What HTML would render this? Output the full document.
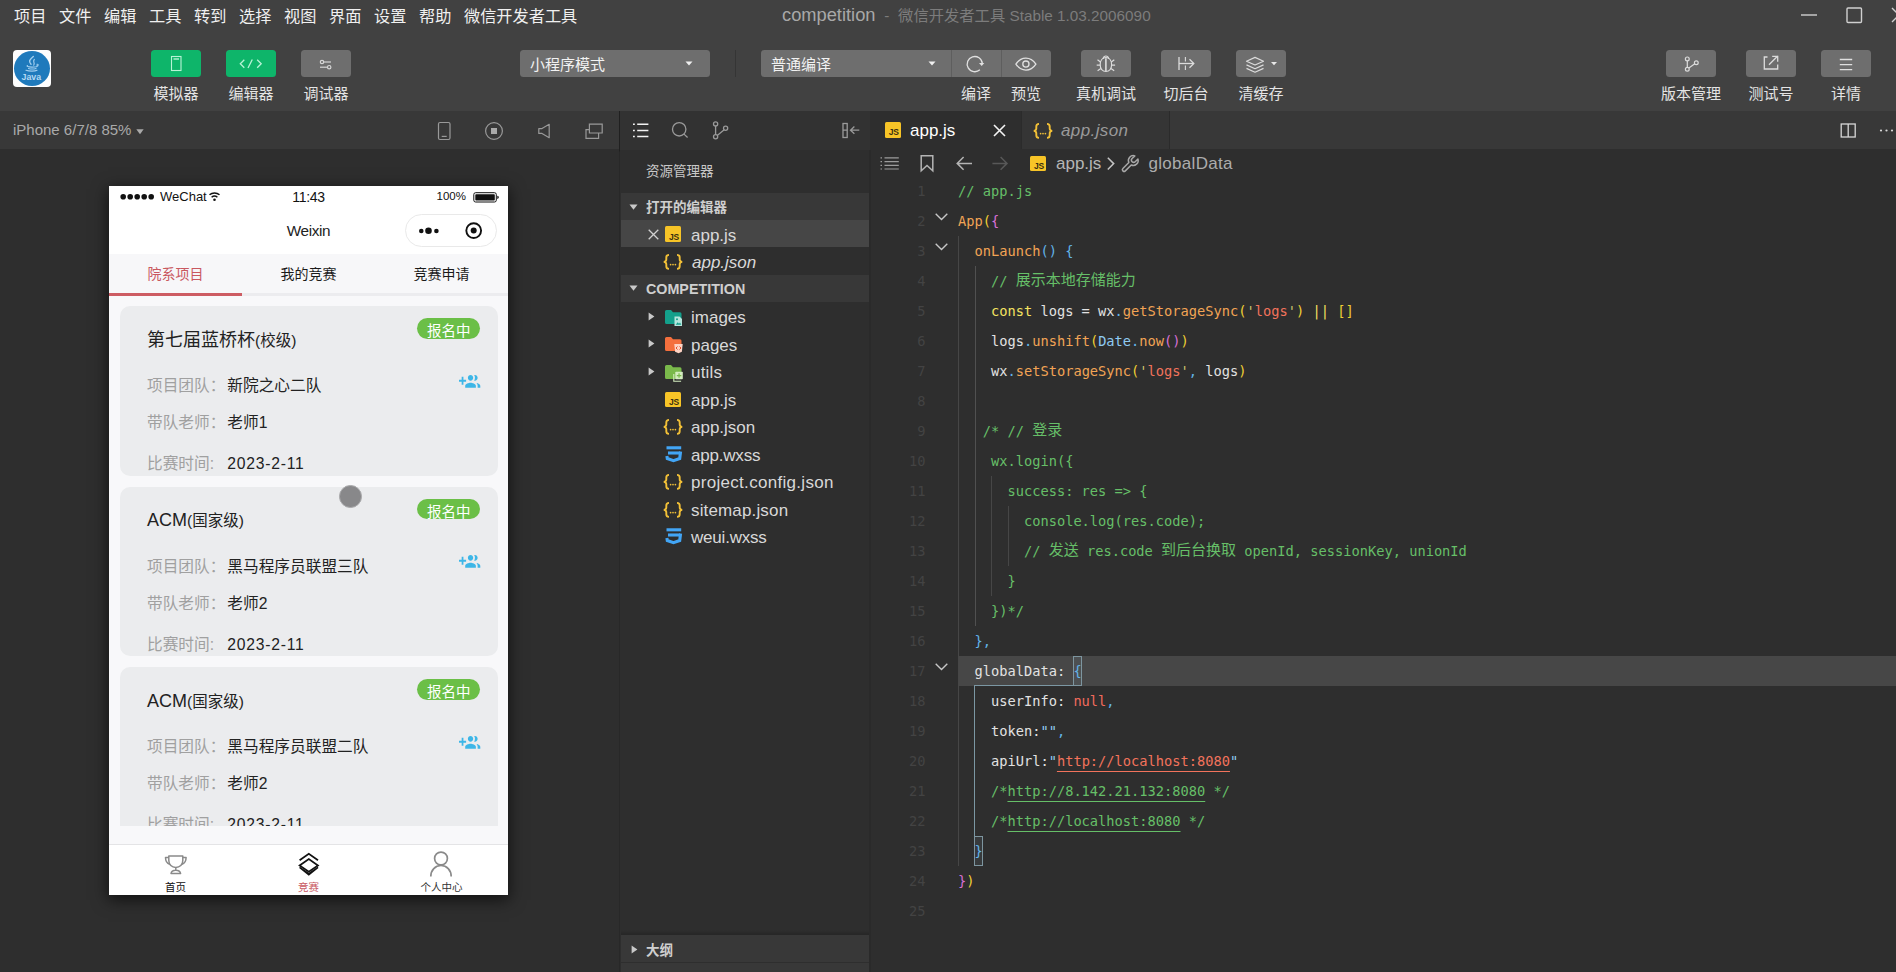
<!DOCTYPE html>
<html lang="zh-CN">
<head>
<meta charset="utf-8">
<title>competition - 微信开发者工具 Stable 1.03.2006090</title>
<style>
*{box-sizing:border-box;margin:0;padding:0}
html,body{width:1896px;height:972px;overflow:hidden;background:#2e2e2e}
body{font-family:"Liberation Sans","Noto Sans CJK SC",sans-serif;color:#ddd;position:relative}
.abs{position:absolute}
svg{display:block;overflow:visible}
/* ---------- top bar ---------- */
#topbar{position:absolute;left:0;top:0;width:1896px;height:111px;background:#414141}
.menu{position:absolute;top:1px;height:30px;line-height:30px;font-size:16.200px;color:#f0f0f0;white-space:nowrap}
#title{position:absolute;left:782px;top:0;height:30px;line-height:30px;white-space:nowrap;font-size:15.300px;color:#7c7c7c}
#title b{font-weight:normal;font-size:18.300px;color:#a8a8a8}
.tbtn{position:absolute;top:50px;width:50px;height:27px;border-radius:3.500px;background:#6e6e6e}
.tbtn.g{background:#0eb56a}
.tbtn svg{position:absolute;left:0;top:0}
.tlab{position:absolute;top:83px;height:22px;line-height:22px;font-size:15px;color:#e4e4e4;white-space:nowrap;transform:translateX(-50%)}
.sel{position:absolute;top:50px;height:27px;border-radius:3.500px;background:#6e6e6e;font-size:15px;line-height:30px;color:#f2f2f2;padding-left:10px;white-space:nowrap}
/* ---------- second bar ---------- */
#simbar{position:absolute;left:0;top:111px;width:619px;height:38px;background:#383838}
#expbar{position:absolute;left:620px;top:111px;width:250px;height:39px;background:#323232}
#tabbar{position:absolute;left:871px;top:111px;width:1025px;height:38px;background:#383838}
#vline1{position:absolute;left:619px;top:111px;width:1px;height:861px;background:linear-gradient(#202020 0,#202020 40px,#282828 41px,#282828 100%)}
#vline2{position:absolute;left:869px;top:150px;width:2px;height:822px;background:#2a2a2a}

/* shared icons */
.jsico{position:absolute;width:15.500px;height:15.500px;border-radius:1.500px;background:#f7c427}
.jsico span{position:absolute;right:1.800px;bottom:1.200px;font:bold 8.500px/8px "Liberation Sans",sans-serif;color:#3a2f10;letter-spacing:-.2px}
.jsonico{position:absolute;font:bold 15px/18px "Liberation Sans",sans-serif;color:#f2c037;white-space:nowrap;letter-spacing:-0.5px}
.jsonico i{font-style:normal;font-size:9px;letter-spacing:0.5px;position:relative;top:0px;font-weight:bold}
.fname{position:absolute;font-size:17px;line-height:30px;height:28px;white-space:nowrap;color:#d8d8d8}

/* ---------- simulator phone ---------- */
#phone{position:absolute;left:109px;top:186px;width:399px;height:709px;background:#f8f8fa;box-shadow:0 4px 15px 1px rgba(0,0,0,.62);overflow:hidden;color:#222}
#phone .st{position:absolute;top:0;height:21px;line-height:21px;white-space:nowrap;color:#111}
#pnav{position:absolute;left:0;top:0;width:399px;height:68px;background:#fff}
#ptabs{position:absolute;left:0;top:68px;width:399px;height:42px;background:#f7f7f9}
#ptabs div.t{position:absolute;top:0;height:39px;line-height:41px;font-size:14px;width:133px;text-align:center;color:#1a1a1a}
.card{position:absolute;left:11px;width:378px;height:169.500px;border-radius:10px;background:#ebecee}
.card .ti{position:absolute;left:27px;top:19.500px;height:28px;line-height:28px;font-size:18px;color:#222;white-space:nowrap}
.card .ti small{font-size:15.500px}
.card .bd{position:absolute;left:297px;top:11.800px;width:63.300px;height:20.800px;border-radius:10.400px;background:#6bbf47;color:#fff;font-size:14.500px;line-height:26px;text-align:center;overflow:hidden}
.card .r{position:absolute;left:27px;height:24px;line-height:24px;font-size:15.700px;white-space:nowrap;color:#222}
.card .r em{font-style:normal;color:#a0a0a0;display:inline-block;width:80.300px}
.card .r1{top:68px}.card .r2{top:105px}.card .r3{top:146px}
.card .r3 b{font-weight:normal;letter-spacing:.77px}
.card svg.ga{position:absolute;left:339.300px;top:63.400px}
#ptab{position:absolute;left:0;top:658px;width:399px;height:51px;background:#fff;border-top:1px solid #e4e4e6}
#ptab .l{position:absolute;top:35.200px;width:133px;text-align:center;font-size:10.500px;line-height:14px;height:14px}

/* ---------- explorer ---------- */
#explorer{position:absolute;left:620px;top:150px;width:249px;height:822px;background:#2e2e2e;overflow:hidden}
.ehdr{position:absolute;left:1px;width:248px;background:#383838;color:#cfcfcf;font-weight:bold;white-space:nowrap}
.ehdr span{position:absolute;left:25px;top:0}
.erow{position:absolute;left:1px;width:248px;height:27.500px}

.tri{position:absolute}

/* ---------- editor ---------- */
#editor{position:absolute;left:871px;top:150px;width:1025px;height:822px;background:#2e2e2e;overflow:hidden}
#crumbs{position:absolute;left:0;top:0;width:1025px;height:26px}
#crumbs .bt{position:absolute;top:0;height:27px;line-height:27px;font-size:17px;color:#c4c4c4;white-space:nowrap}
.ln{position:absolute;left:0;width:54.500px;height:30px;line-height:30px;text-align:right;font-family:"DejaVu Sans Mono","Liberation Mono",monospace;font-size:13.700px;color:#434343}
.cl{position:absolute;left:87px;height:30px;line-height:30px;white-space:pre;font-family:"DejaVu Sans Mono","Liberation Mono","Noto Sans CJK SC",monospace;font-size:13.700px;color:#e2e2e2}
.cl .cj{font-family:"Noto Sans CJK SC",sans-serif;font-size:15px;line-height:0;position:relative;top:-1px}
.c{color:#66bf68}.f{color:#f2a455}.y{color:#efce34}.p{color:#d770d6}.b{color:#62b3e8}.k{color:#f4e361}.s{color:#f2735c}.q{color:#cbc66e}.n{color:#f26b5c}.d{color:#8ecaf2}.lb{color:#93cdf2}
.u{text-decoration:underline;text-underline-offset:4.500px;text-decoration-thickness:1px}
.gd{position:absolute;width:1px;background:#464646}
.bm{position:absolute;width:9px;height:30px;border:1px solid #7d959f;background:rgba(120,150,165,.12)}
.fold{position:absolute;left:64px}
</style>
</head>
<body>
<!-- ================= TOP BAR ================= -->
<div id="topbar">
  <div class="menu" style="left:14px">项目</div>
  <div class="menu" style="left:59px">文件</div>
  <div class="menu" style="left:104px">编辑</div>
  <div class="menu" style="left:149px">工具</div>
  <div class="menu" style="left:194px">转到</div>
  <div class="menu" style="left:239px">选择</div>
  <div class="menu" style="left:284px">视图</div>
  <div class="menu" style="left:329px">界面</div>
  <div class="menu" style="left:374px">设置</div>
  <div class="menu" style="left:419px">帮助</div>
  <div class="menu" style="left:464px">微信开发者工具</div>
  <div id="title"><b>competition</b><span style="margin:0 4.500px"> - </span>微信开发者工具 Stable 1.03.2006090</div>
  <!-- window controls -->
  <svg class="abs" style="left:1796px;top:0" width="100" height="30" viewBox="0 0 100 30"><g fill="none" stroke="#d0d0d0" stroke-width="1.4"><path d="M5 15h16"/><rect x="51" y="8" width="14.5" height="14.5" rx="1"/><path d="M96 8l7 7-7 7"/></g></svg>
  <!-- avatar -->
  <div class="abs" style="left:13px;top:50px;width:38px;height:37px;border-radius:4px;background:#fdfdfd;overflow:hidden">
    <div class="abs" style="left:1px;top:1px;width:36px;height:35px;border-radius:50%;background:#1f7abc"></div>
    <svg class="abs" style="left:0;top:0" width="38" height="37" viewBox="0 0 38 37"><g fill="none" stroke="#9fcdee" stroke-linecap="round"><path d="M20.300 6.500c-3.800 3.200-5 5-2.300 7.800" stroke-width="1.500"/><path d="M21.300 9.500c-2.200 2.300 1.300 3.400-.6 5.600" stroke-width="1.200"/><path d="M14.500 15.500c-1.300.8.500 1.600 4.500 1.600s6-.6 5-1.400M24 14.300c1.600-.3 1.600 1.600-.3 2.300" stroke-width="1.100"/><path d="M15.500 18.400c2 .7 5.500.7 7.500 0" stroke-width="1.100"/><path d="M13 20.300c3 1.100 9 1.100 11 0" stroke-width="1.200"/></g><text x="18.300" y="30.300" text-anchor="middle" font-family="Liberation Sans, sans-serif" font-weight="bold" font-size="8.800" fill="#b5d9f3">Java</text></svg>
  </div>
  <!-- 模拟器 / 编辑器 / 调试器 -->
  <div class="tbtn g" style="left:151px"><svg width="50" height="27" viewBox="0 0 50 27"><g fill="none" stroke="#b9f3d6" stroke-width="1.1"><rect x="20.500" y="6.500" width="9.500" height="14"/><path d="M22.500 9h5.500" stroke-width="1.400"/></g></svg></div>
  <div class="tbtn g" style="left:226px"><svg width="50" height="27" viewBox="0 0 50 27"><g fill="none" stroke="#b9f3d6" stroke-width="1.300"><path d="M18.300 9.700L14.300 13.700l4 4"/><path d="M26.300 9.500L22 18"/><path d="M31.200 9.700l4 4-4 4"/></g></svg></div>
  <div class="tbtn" style="left:301px"><svg width="50" height="27" viewBox="0 0 50 27"><g fill="none" stroke="#d6d6d6" stroke-width="1.200"><circle cx="21" cy="12" r="1.700"/><path d="M22.700 12H30"/><circle cx="28.200" cy="17.200" r="1.700"/><path d="M19 17.200h7.500"/></g></svg></div>
  <div class="tlab" style="left:176px">模拟器</div>
  <div class="tlab" style="left:251px">编辑器</div>
  <div class="tlab" style="left:326px">调试器</div>
  <!-- 小程序模式 -->
  <div class="sel" style="left:520px;width:190px">小程序模式<svg class="abs" style="left:165px;top:11px" width="8" height="5" viewBox="0 0 8 5"><path d="M0.500 0.500h7L4 4.500z" fill="#f0f0f0"/></svg></div>
  <div class="abs" style="left:735px;top:50px;width:1px;height:27px;background:#353535"></div>
  <!-- 普通编译 group -->
  <div class="sel" style="left:761px;width:290px">普通编译<svg class="abs" style="left:167px;top:11px" width="8" height="5" viewBox="0 0 8 5"><path d="M0.500 0.500h7L4 4.500z" fill="#f0f0f0"/></svg>
    <div class="abs" style="left:190px;top:0;width:1px;height:27px;background:#5e5e5e"></div>
    <div class="abs" style="left:240px;top:0;width:1px;height:27px;background:#5e5e5e"></div>
    <svg class="abs" style="left:190px;top:0" width="100" height="27" viewBox="0 0 100 27"><g fill="none" stroke="#e0e0e0" stroke-width="1.300"><path d="M28.900 19.750A7.600 7.600 0 1 1 31.370 13.440"/><path d="M64.900 14.100C68 9.500 71.500 8.100 74.900 8.100s6.900 1.400 10 6c-3.100 4.600-6.600 6-10 6s-6.900-1.400-10-6z"/><circle cx="74.900" cy="14.100" r="3.100"/></g><path d="M28 13.100h5.300l-2.600 2.900z" fill="#e0e0e0"/></svg>
  </div>
  <div class="tlab" style="left:976px">编译</div>
  <div class="tlab" style="left:1026px">预览</div>
  <!-- 真机调试 -->
  <div class="tbtn" style="left:1081px"><svg width="50" height="27" viewBox="0 0 50 27"><g fill="none" stroke="#dcdcdc" stroke-width="1.200"><path d="M19.200 14.800c0-4.300 2.300-7.300 5.700-7.300s5.700 3 5.700 7.300c0 4-2.300 6.700-5.700 6.700s-5.700-2.700-5.700-6.700z"/><path d="M22 8.800c.500-1.800 1.600-2.800 2.900-2.800s2.400 1 2.900 2.800"/><path d="M24.900 8.200v13" stroke-width="1.600"/><path d="M19.500 12l-3-2.300M19.200 15.200h-3.500M19.800 18.400l-3.200 2.300M30.300 12l3-2.300M30.600 15.200h3.500M30 18.400l3.200 2.300"/></g></svg></div>
  <div class="tlab" style="left:1106px">真机调试</div>
  <!-- 切后台 -->
  <div class="tbtn" style="left:1161px"><svg width="50" height="27" viewBox="0 0 50 27"><g fill="none" stroke="#dcdcdc" stroke-width="1.300"><path d="M18 7v13"/><path d="M24.400 7v4.500M24.400 15.500v4.500" stroke-width="1.100"/><path d="M18 13.500h14.500"/><path d="M28.500 9.200l4.300 4.300-4.300 4.300"/></g></svg></div>
  <div class="tlab" style="left:1186px">切后台</div>
  <!-- 清缓存 -->
  <div class="tbtn" style="left:1236px"><svg width="50" height="27" viewBox="0 0 50 27"><g fill="none" stroke="#dcdcdc" stroke-width="1.200" stroke-linejoin="round"><path d="M10.500 11.200L19 7.400l8.500 3.800L19 15z"/><path d="M10.500 14.900L19 18.700l8.500-3.800"/><path d="M10.500 18.400L19 22.200l8.500-3.800"/></g><path d="M35 12h6l-3 3.200z" fill="#e8e8e8"/></svg></div>
  <div class="tlab" style="left:1261px">清缓存</div>
  <!-- 版本管理 -->
  <div class="tbtn" style="left:1666px"><svg width="50" height="27" viewBox="0 0 50 27"><g fill="none" stroke="#dcdcdc" stroke-width="1.200"><circle cx="21.300" cy="8.900" r="1.900"/><circle cx="21.300" cy="19.200" r="1.900"/><circle cx="30.300" cy="12.700" r="1.900"/><path d="M21.300 10.800v6.500M22.900 18.100l5.900-4.300"/></g></svg></div>
  <div class="tlab" style="left:1691px">版本管理</div>
  <!-- 测试号 -->
  <div class="tbtn" style="left:1746px"><svg width="50" height="27" viewBox="0 0 50 27"><g fill="none" stroke="#dcdcdc" stroke-width="1.300"><path d="M21.500 7h-3.200v12h13.400v-4.500"/><path d="M23 14.700l8.700-8.700M26.200 6.300h5.500v5.500"/></g></svg></div>
  <div class="tlab" style="left:1771px">测试号</div>
  <!-- 详情 -->
  <div class="tbtn" style="left:1821px"><svg width="50" height="27" viewBox="0 0 50 27"><g fill="none" stroke="#e0e0e0" stroke-width="1.300"><path d="M18.800 9.500h12.400M18.800 14.700h12.400M18.800 19.700h12.400"/></g></svg></div>
  <div class="tlab" style="left:1846px">详情</div>
  <!--TOPBAR-EXTRA-->
</div>
<!-- ================= SECOND BAR ================= -->
<div id="simbar"><div class="abs" style="left:13px;top:0;height:38px;line-height:38px;font-size:15px;color:#a9a9a9;white-space:nowrap">iPhone 6/7/8 85%</div>
  <svg class="abs" style="left:135.500px;top:17.500px" width="8" height="6" viewBox="0 0 8 6"><path d="M.3.300h7.400l-3.700 5z" fill="#a9a9a9"/></svg>
  <svg class="abs" style="left:430px;top:0" width="189" height="38" viewBox="430 111 189 38"><g fill="none" stroke="#999" stroke-width="1.200"><rect x="438.500" y="122.500" width="11.500" height="17" rx="1.500"/><path d="M441.700 136.400h5"/><circle cx="494" cy="131" r="8.400"/><rect x="491" y="128" width="6" height="6" fill="#aaa" stroke="none"/><path d="M538.800 128.600h3.200l7.200-4.300v13.400l-7.200-4.300h-3.200z" stroke-linejoin="round"/><path d="M589.400 133v-8.800h12.800v8.800z"/><path d="M589.400 129.700h-3.400v8.700h12.600v-5.400"/></g></svg></div>
<div id="expbar"><svg class="abs" style="left:0;top:0" width="250" height="39" viewBox="620 111 250 39"><g fill="none" stroke="#f2f2f2" stroke-width="1.500"><path d="M633 124.200h1.800M637.200 124.200h11.200M633 130.400h1.800M637.200 130.400h11.200M633 136.500h1.800M637.200 136.500h11.200"/></g><g fill="none" stroke="#9a9a9a" stroke-width="1.300"><circle cx="679.200" cy="129.300" r="6.700"/><path d="M684 134.100l3.600 3.400"/><circle cx="715.600" cy="123.900" r="2.100"/><circle cx="715.600" cy="136.800" r="2.100"/><circle cx="725.600" cy="128.300" r="2.100"/><path d="M715.600 126v8.700M717.200 135.500l7-5.800"/><rect x="843" y="123.500" width="4.200" height="14"/><path d="M843 130.200h4.200M859.300 130.200h-8.600M854.400 126.600l-3.900 3.600 3.900 3.600"/></g></svg></div>
<div id="tabbar"><div class="abs" style="left:0;top:0;width:150px;height:39px;background:#2e2e2e"></div>
  <div class="abs" style="left:150px;top:0;width:149px;height:38px;background:#353535;border-left:1px solid #2b2b2b;border-right:1px solid #2b2b2b"></div>
  <div class="jsico" style="left:14px;top:11px"><span>JS</span></div>
  <div class="abs" style="left:39px;top:6px;font-size:17px;line-height:28px;color:#fff;white-space:nowrap">app.js</div>
  <svg class="abs" style="left:122px;top:13px" width="13" height="13" viewBox="0 0 13 13"><path d="M1 1l11 11M12 1L1 12" stroke="#f4f4f4" stroke-width="1.600" fill="none"/></svg>
  <svg class="abs" style="left:162px;top:11.5px" width="20" height="16" viewBox="0 0 20 16"><g fill="none" stroke="#f2c037" stroke-width="1.900"><path d="M6 .9C3.700.9 3.300 1.700 3.300 3.500v2c0 1.500-.8 2.200-2.500 2.400 1.700.2 2.500.9 2.500 2.400v2c0 1.800.4 2.600 2.700 2.600"/><path d="M14 .9c2.300 0 2.700.8 2.700 2.600v2c0 1.500.8 2.200 2.500 2.400-1.700.2-2.500.9-2.500 2.400v2c0 1.800-.4 2.600-2.700 2.600"/></g><g fill="#f2c037"><circle cx="7.600" cy="10.600" r=".85"/><circle cx="10" cy="10.600" r=".85"/><circle cx="12.400" cy="10.600" r=".85"/></g></svg>
  <div class="abs" style="left:190px;top:6px;font-size:17px;line-height:28px;color:#9a9a9a;font-style:italic;white-space:nowrap;letter-spacing:.4px">app.json</div>
  <svg class="abs" style="left:965px;top:0" width="60" height="38" viewBox="1836 111 60 38"><g fill="none" stroke="#d8d8d8" stroke-width="1.300"><rect x="1841.200" y="124" width="14" height="13"/><path d="M1848.200 124v13"/></g><g fill="#d8d8d8"><circle cx="1881" cy="130.500" r="1.100"/><circle cx="1886.500" cy="130.500" r="1.100"/><circle cx="1892" cy="130.500" r="1.100"/></g></svg></div>
<div id="vline1"></div>
<div id="vline2"></div>
<!-- ================= SIMULATOR ================= -->
<div id="phone">
  <div id="pnav">
    <svg class="abs" style="left:0;top:0" width="399" height="21" viewBox="109 186 399 21"><g fill="#111"><circle cx="123.2" cy="196.800" r="2.800"/><circle cx="130.2" cy="196.800" r="2.800"/><circle cx="137.2" cy="196.800" r="2.800"/><circle cx="144.2" cy="196.800" r="2.800"/><circle cx="151.2" cy="196.800" r="2.800"/></g><g fill="none" stroke="#111" stroke-width="1.500"><path d="M209.500 194.800a7.500 7.500 0 0 1 10 0"/><path d="M211.600 197.300a4.500 4.500 0 0 1 5.800 0"/></g><circle cx="214.500" cy="199.700" r="1.300" fill="#111"/><rect x="473.800" y="192.700" width="22.500" height="9.300" rx="1.800" fill="none" stroke="#111" stroke-width="1"/><rect x="475.300" y="194.200" width="19.500" height="6.300" rx=".8" fill="#111"/><path d="M497.300 195.700v3.300c1-.2 1.500-.8 1.500-1.650s-.5-1.450-1.500-1.650z" fill="#111"/></svg>
    <div class="st" style="left:51px;font-size:13px">WeChat</div>
    <div class="st" style="left:0;width:399px;text-align:center;font-size:14px;letter-spacing:-.3px;line-height:22px">11:43</div>
    <div class="st" style="left:327.500px;font-size:11.500px">100%</div>
    <div class="abs" style="left:0;top:30px;width:399px;height:29px;line-height:30px;text-align:center;font-size:15.300px;letter-spacing:-.35px;color:#222">Weixin</div>
    <div class="abs" style="left:296px;top:28px;width:92px;height:33px;border-radius:16.500px;border:1px solid #e9e9e9;background:#fff"></div>
    <svg class="abs" style="left:296px;top:28px" width="92" height="33" viewBox="405 214 92 33"><g fill="#111"><circle cx="421.300" cy="231" r="2.300"/><circle cx="428.500" cy="230.700" r="3.300"/><circle cx="436.400" cy="231" r="2.300"/><circle cx="473.700" cy="230.600" r="3"/></g><circle cx="473.700" cy="230.600" r="7.400" fill="none" stroke="#111" stroke-width="1.900"/></svg>
  </div>
  <div id="ptabs">
    <div class="t" style="left:0;color:#c9585f">院系项目</div>
    <div class="t" style="left:133px">我的竞赛</div>
    <div class="t" style="left:266px">竞赛申请</div>
    <div class="abs" style="left:0;top:38.500px;width:399px;height:3px;background:#ececef"></div>
    <div class="abs" style="left:0;top:38.500px;width:133px;height:3px;background:#cd5c63"></div>
  </div>
  <div class="abs" style="left:0;top:110px;width:399px;height:530px;overflow:hidden">
  <div class="card" style="top:10.300px">
    <div class="ti">第七届蓝桥杯<small>(校级)</small></div>
    <div class="bd">报名中</div>
    <div class="r r1"><em>项目团队：</em>新院之心二队</div><svg class="ga" width="21.300" height="23.500" viewBox="0 0 24 24" preserveAspectRatio="none"><path fill="#3db6e7" d="M8 10H5V7H3v3H0v2h3v3h2v-3h3v-2zm10 1c1.660 0 2.990-1.340 2.990-3S19.660 5 18 5c-.320 0-.630.050-.910.140.570.810.900 1.790.900 2.860s-.340 2.040-.900 2.860c.280.090.590.140.910.140zm-5 0c1.660 0 2.990-1.340 2.990-3S14.660 5 13 5c-1.660 0-3 1.340-3 3s1.340 3 3 3zm6.620 2.160c.830.730 1.380 1.660 1.380 2.840v2h3v-2c0-1.540-2.370-2.490-4.380-2.840zM13 13c-2 0-6 1-6 3v2h12v-2c0-2-4-3-6-3z"/></svg>
    <div class="r r2"><em>带队老师：</em>老师1</div>
    <div class="r r3"><em>比赛时间:</em><b>2023-2-11</b></div>
  </div>
  <div class="card" style="top:190.800px">
    <div class="ti">ACM<small>(国家级)</small></div>
    <div class="bd">报名中</div>
    <div class="r r1"><em>项目团队：</em>黑马程序员联盟三队</div><svg class="ga" width="21.300" height="23.500" viewBox="0 0 24 24" preserveAspectRatio="none"><path fill="#3db6e7" d="M8 10H5V7H3v3H0v2h3v3h2v-3h3v-2zm10 1c1.660 0 2.990-1.340 2.990-3S19.660 5 18 5c-.320 0-.630.050-.910.140.570.810.900 1.790.900 2.860s-.340 2.040-.900 2.860c.280.090.590.140.910.140zm-5 0c1.660 0 2.990-1.340 2.990-3S14.660 5 13 5c-1.660 0-3 1.340-3 3s1.340 3 3 3zm6.620 2.160c.830.730 1.380 1.660 1.380 2.840v2h3v-2c0-1.540-2.370-2.490-4.380-2.840zM13 13c-2 0-6 1-6 3v2h12v-2c0-2-4-3-6-3z"/></svg>
    <div class="r r2"><em>带队老师：</em>老师2</div>
    <div class="r r3"><em>比赛时间:</em><b>2023-2-11</b></div>
  </div>
  <div class="card" style="top:371.300px;border-bottom-left-radius:0;border-bottom-right-radius:0">
    <div class="ti">ACM<small>(国家级)</small></div>
    <div class="bd">报名中</div>
    <div class="r r1"><em>项目团队：</em>黑马程序员联盟二队</div><svg class="ga" width="21.300" height="23.500" viewBox="0 0 24 24" preserveAspectRatio="none"><path fill="#3db6e7" d="M8 10H5V7H3v3H0v2h3v3h2v-3h3v-2zm10 1c1.660 0 2.990-1.340 2.990-3S19.660 5 18 5c-.320 0-.630.050-.910.140.570.810.900 1.790.900 2.860s-.340 2.040-.900 2.860c.280.090.590.140.910.140zm-5 0c1.660 0 2.990-1.340 2.990-3S14.660 5 13 5c-1.660 0-3 1.340-3 3s1.340 3 3 3zm6.620 2.160c.830.730 1.380 1.660 1.380 2.840v2h3v-2c0-1.540-2.370-2.490-4.380-2.840zM13 13c-2 0-6 1-6 3v2h12v-2c0-2-4-3-6-3z"/></svg>
    <div class="r r2"><em>带队老师：</em>老师2</div>
    <div class="r r3"><em>比赛时间:</em><b>2023-2-11</b></div>
  </div>
    <div class="abs" style="left:230px;top:189.100px;width:22.800px;height:22.800px;border-radius:50%;background:#88888a;border:1.500px solid #aaaaac"></div>
  </div>
  <div id="ptab">
    <svg class="abs" style="left:0;top:0" width="399" height="34" viewBox="109 845 399 34"><g fill="none" stroke="#8a8a8a" stroke-width="1.500" stroke-linejoin="round"><path d="M168.800 856h14v4.500c0 4.200-3 7-7 7s-7-2.800-7-7z"/><path d="M168.800 857.500h-3.300c0 3.800 1.800 6 4.300 6.800M182.800 857.500h3.300c0 3.800-1.800 6-4.300 6.800"/><path d="M175.800 867.500v2.800M171 873.500c.3-2 1.800-3.200 4.800-3.200s4.500 1.200 4.800 3.200z"/></g><g fill="none" stroke="#111" stroke-width="1.700" stroke-linejoin="miter"><path d="M299.600 865.500l9.200-6.500 9.200 6.500-9.200 6.300z"/><path d="M299.600 867.300l9.200 6.300 9.200-6.300l-9.200 7.400z" stroke-width="1.500"/><path d="M299.600 860.300l9.200-6.600 9.200 6.600"/></g><g fill="none" stroke="#8a8a8a" stroke-width="1.700"><circle cx="441" cy="858.500" r="6.400"/><path d="M430.800 876.500c0-6.500 4.500-11 10.200-11s10.200 4.500 10.200 11"/></g></svg>
    <div class="l" style="left:0;color:#111">首页</div>
    <div class="l" style="left:133px;color:#c9585f">竞赛</div>
    <div class="l" style="left:266px;color:#333">个人中心</div>
  </div>
</div>

<!-- ================= EXPLORER ================= -->
<div id="explorer">
  <div class="abs" style="left:26px;top:12px;height:20px;line-height:20px;font-size:13.500px;color:#c8c8c8;white-space:nowrap">资源管理器</div>
  <div class="ehdr" style="top:43px;height:27.300px;line-height:30px;font-size:13.500px"><svg class="tri" style="left:7.5px;top:10.5px" width="9" height="6" viewBox="0 0 9 6"><path d="M.500.500h8l-4 5.200z" fill="#c8c8c8"/></svg><span>打开的编辑器</span></div>
  <div class="abs" style="left:1px;top:70.3px;width:248px;height:27.200px;background:#464646"></div>
  <svg class="abs" style="left:27.8px;top:79.2px" width="11" height="11" viewBox="0 0 11 11"><path d="M.7.700l9.600 9.600M10.300.700L.7 10.300" stroke="#d0d0d0" stroke-width="1.300" fill="none"/></svg>
  <div class="jsico" style="left:45.3px;top:76.3px"><span>JS</span></div>
  <div class="fname" style="left:71px;top:70.7px">app.js</div>
  <svg class="abs" style="left:43px;top:104.3px" width="20" height="16" viewBox="0 0 20 16"><g fill="none" stroke="#f2c037" stroke-width="1.900"><path d="M6 .9C3.700.9 3.300 1.700 3.300 3.500v2c0 1.500-.8 2.200-2.500 2.400 1.700.2 2.500.9 2.500 2.400v2c0 1.800.4 2.600 2.700 2.600"/><path d="M14 .9c2.300 0 2.700.8 2.700 2.600v2c0 1.500.8 2.200 2.500 2.400-1.700.2-2.500.9-2.500 2.400v2c0 1.800-.4 2.600-2.700 2.600"/></g><g fill="#f2c037"><circle cx="7.600" cy="10.600" r=".85"/><circle cx="10" cy="10.600" r=".85"/><circle cx="12.400" cy="10.600" r=".85"/></g></svg>
  <div class="fname" style="left:72px;top:98.1px;font-style:italic">app.json</div>
  <div class="ehdr" style="top:125px;height:26.800px;line-height:28.800px;font-size:14.300px"><svg class="tri" style="left:7.5px;top:10px" width="9" height="6" viewBox="0 0 9 6"><path d="M.500.500h8l-4 5.200z" fill="#c8c8c8"/></svg><span>COMPETITION</span></div>
  <svg class="tri" style="left:27.5px;top:161.8px" width="7" height="9" viewBox="0 0 7 9"><path d="M.6.500l5.800 4-5.800 4z" fill="#c8c8c8"/></svg>
  <svg class="abs" style="left:44.8px;top:159.9px" width="19" height="17" viewBox="0 0 19 17"><path d="M0 1.500q0-1.500 1.500-1.500h4.500l2 2.200h7q1.500 0 1.500 1.500v8.800q0 1.500-1.500 1.500h-13.500q-1.500 0-1.500-1.500z" fill="#13a08b"/><path d="M9.500 6.500h5l2.500 2.500v7h-7.500z" fill="#b5e6dd"/><path d="M10.700 14.800l2-2.600 1.300 1.500 1-1.100 1.300 2.200z" fill="#13a08b"/><circle cx="12" cy="9.300" r="1" fill="#13a08b"/></svg>
  <div class="fname" style="left:71px;top:153.1px">images</div>
  <svg class="tri" style="left:27.5px;top:189.3px" width="7" height="9" viewBox="0 0 7 9"><path d="M.6.500l5.800 4-5.800 4z" fill="#c8c8c8"/></svg>
  <svg class="abs" style="left:44.8px;top:187.4px" width="19" height="17" viewBox="0 0 19 17"><path d="M0 1.500q0-1.500 1.500-1.500h4.500l2 2.200h7q1.500 0 1.500 1.500v8.800q0 1.500-1.500 1.500h-13.500q-1.500 0-1.500-1.500z" fill="#f46f3d"/><path d="M9.300 7h8.400l-.8 7.800-3.400 1.400-3.400-1.400z" fill="#fdd3c4"/><path d="M12.500 9.500l-1.500 1.500 1.500 1.500M14.500 9.500l1.500 1.500-1.500 1.500" fill="none" stroke="#e8502a" stroke-width="1"/></svg>
  <div class="fname" style="left:71px;top:180.6px">pages</div>
  <svg class="tri" style="left:27.5px;top:216.8px" width="7" height="9" viewBox="0 0 7 9"><path d="M.6.500l5.800 4-5.800 4z" fill="#c8c8c8"/></svg>
  <svg class="abs" style="left:44.8px;top:214.9px" width="19" height="17" viewBox="0 0 19 17"><path d="M0 1.500q0-1.500 1.500-1.500h4.500l2 2.200h7q1.500 0 1.500 1.500v8.800q0 1.500-1.500 1.500h-13.500q-1.500 0-1.500-1.500z" fill="#7ab94b"/><path d="M8.800 9v7.300h7.300" fill="none" stroke="#d4edc0" stroke-width="1.100"/><rect x="10.300" y="6.800" width="7.500" height="7.500" rx=".8" fill="#d4edc0"/><path d="M14.050 8.300v4.500M11.800 10.550h4.500" stroke="#7ab94b" stroke-width="1.200"/></svg>
  <div class="fname" style="left:71px;top:208.1px;letter-spacing:0.2px">utils</div>
  <div class="jsico" style="left:45.3px;top:241.6px"><span>JS</span></div>
  <div class="fname" style="left:71px;top:235.6px">app.js</div>
  <svg class="abs" style="left:43px;top:269.2px" width="20" height="16" viewBox="0 0 20 16"><g fill="none" stroke="#f2c037" stroke-width="1.900"><path d="M6 .9C3.700.9 3.300 1.700 3.300 3.500v2c0 1.500-.8 2.200-2.500 2.400 1.700.2 2.500.9 2.500 2.400v2c0 1.800.4 2.600 2.700 2.600"/><path d="M14 .9c2.300 0 2.700.8 2.700 2.600v2c0 1.500.8 2.200 2.500 2.400-1.700.2-2.500.9-2.500 2.400v2c0 1.800-.4 2.600-2.700 2.600"/></g><g fill="#f2c037"><circle cx="7.600" cy="10.600" r=".85"/><circle cx="10" cy="10.600" r=".85"/><circle cx="12.400" cy="10.600" r=".85"/></g></svg>
  <div class="fname" style="left:71px;top:263.1px">app.json</div>
  <svg class="abs" style="left:44.6px;top:295.9px" width="17" height="16" viewBox="0 0 17 16"><g fill="none" stroke="#42a5f5" stroke-width="3.100"><path d="M1.500 1.800h14.700"/><path d="M3 7h11.800"/><path d="M1.900 10l.4 2.500 6.200 2.200 6.200-2.200.9-7" stroke-linejoin="miter"/></g></svg>
  <div class="fname" style="left:71px;top:290.6px;letter-spacing:-0.2px">app.wxss</div>
  <svg class="abs" style="left:43px;top:324.2px" width="20" height="16" viewBox="0 0 20 16"><g fill="none" stroke="#f2c037" stroke-width="1.900"><path d="M6 .9C3.700.9 3.300 1.700 3.300 3.500v2c0 1.500-.8 2.200-2.500 2.400 1.700.2 2.500.9 2.500 2.400v2c0 1.800.4 2.600 2.700 2.600"/><path d="M14 .9c2.300 0 2.700.8 2.700 2.600v2c0 1.500.8 2.200 2.500 2.400-1.700.2-2.500.9-2.500 2.400v2c0 1.800-.4 2.600-2.700 2.600"/></g><g fill="#f2c037"><circle cx="7.600" cy="10.600" r=".85"/><circle cx="10" cy="10.600" r=".85"/><circle cx="12.400" cy="10.600" r=".85"/></g></svg>
  <div class="fname" style="left:71px;top:318.1px;letter-spacing:0.3px">project.config.json</div>
  <svg class="abs" style="left:43px;top:351.7px" width="20" height="16" viewBox="0 0 20 16"><g fill="none" stroke="#f2c037" stroke-width="1.900"><path d="M6 .9C3.700.9 3.300 1.700 3.300 3.500v2c0 1.500-.8 2.200-2.500 2.400 1.700.2 2.500.9 2.500 2.400v2c0 1.800.4 2.600 2.700 2.600"/><path d="M14 .9c2.300 0 2.700.8 2.700 2.600v2c0 1.500.8 2.200 2.500 2.400-1.700.2-2.500.9-2.500 2.400v2c0 1.800-.4 2.600-2.700 2.600"/></g><g fill="#f2c037"><circle cx="7.600" cy="10.600" r=".85"/><circle cx="10" cy="10.600" r=".85"/><circle cx="12.400" cy="10.600" r=".85"/></g></svg>
  <div class="fname" style="left:71px;top:345.6px;letter-spacing:0.15px">sitemap.json</div>
  <svg class="abs" style="left:44.6px;top:378.4px" width="17" height="16" viewBox="0 0 17 16"><g fill="none" stroke="#42a5f5" stroke-width="3.100"><path d="M1.500 1.800h14.700"/><path d="M3 7h11.800"/><path d="M1.900 10l.4 2.500 6.200 2.200 6.200-2.200.9-7" stroke-linejoin="miter"/></g></svg>
  <div class="fname" style="left:71px;top:373.1px;letter-spacing:-0.2px">weui.wxss</div>
  <div class="abs" style="left:1px;top:780px;width:248px;height:5px;background:linear-gradient(rgba(0,0,0,0),rgba(0,0,0,.18))"></div>
  <div class="ehdr" style="top:785px;height:27px;line-height:31.500px;font-size:13.500px"><svg class="tri" style="left:9.5px;top:10px" width="7" height="9" viewBox="0 0 7 9"><path d="M.6.500l5.800 4-5.800 4z" fill="#c8c8c8"/></svg><span>大纲</span></div>
  <div class="ehdr" style="top:813px;height:27px;line-height:35px;font-size:13.500px"><span style="left:34px">时间线</span></div>
</div>

<!-- ================= EDITOR ================= -->
<div id="editor">
  <div id="crumbs">
    <svg class="abs" style="left:0;top:0" width="290" height="27" viewBox="871 150 290 27"><g fill="none" stroke="#9c9c9c" stroke-width="1.200"><path d="M880.500 157.800h1.500M884.500 157.800h14.300M880.500 161.600h1.500M884.500 161.600h14.300M880.500 165.300h1.500M884.500 165.300h14.300M880.500 169h1.500M884.500 169h14.300"/></g><g fill="none" stroke="#b4b4b4" stroke-width="1.500"><path d="M921.200 155.800h11.600v15l-5.800-5.300-5.800 5.300z" stroke-linejoin="miter"/><path d="M972 163.400h-14.800M963.600 157l-6.400 6.400 6.400 6.400"/><path d="M1107.800 157.700l5.900 5.900-5.900 5.900" stroke="#c4c4c4"/></g><g fill="none" stroke="#585858" stroke-width="1.500"><path d="M992.400 163.400h14.600M1000.600 157l6.400 6.400-6.400 6.400"/></g><g transform="translate(1133.300 160.500) rotate(-45)"><path d="M4.350 -2.200H.5A2.200 2.200 0 0 0 .5 2.200H4.350A4.900 4.900 0 0 1 -4.600 1.700H-13A1.700 1.700 0 0 1 -13 -1.700H-4.600A4.900 4.900 0 0 1 4.350 -2.200z" fill="none" stroke="#a8a8a8" stroke-width="1.500" stroke-linejoin="round"/></g></svg>
    <div class="jsico" style="left:159.300px;top:5.600px"><span>JS</span></div>
    <div class="bt" style="left:185px;color:#b6b6b6">app.js</div>
    <div class="bt" style="left:277.500px;letter-spacing:.3px;color:#acacac">globalData</div>
  </div>
  <div class="abs" style="left:87px;top:506px;width:938px;height:30px;background:#474747"></div>
  <div class="gd" style="left:87px;top:86px;height:630px"></div>
  <div class="gd" style="left:103.5px;top:116px;height:360px;background:#505050"></div>
  <div class="gd" style="left:120px;top:326px;height:120px"></div>
  <div class="gd" style="left:136.5px;top:356px;height:60px"></div>
  <div class="gd" style="left:103px;top:536px;height:180px;background:#7b97a3"></div>
  <div class="abs" style="left:103px;top:535px;width:99px;height:1px;background:#7b97a3"></div>
  <div class="bm" style="left:202px;top:506px"></div>
  <div class="bm" style="left:103px;top:686px"></div>
  <svg class="fold" style="top:63px" width="13" height="8" viewBox="0 0 13 8"><path d="M.7.800l5.800 5.800 5.800-5.800" fill="none" stroke="#c6c6c6" stroke-width="1.400"/></svg>
  <svg class="fold" style="top:93px" width="13" height="8" viewBox="0 0 13 8"><path d="M.7.800l5.800 5.800 5.800-5.800" fill="none" stroke="#c6c6c6" stroke-width="1.400"/></svg>
  <svg class="fold" style="top:513px" width="13" height="8" viewBox="0 0 13 8"><path d="M.7.800l5.800 5.800 5.800-5.800" fill="none" stroke="#c6c6c6" stroke-width="1.400"/></svg>
  <div class="ln" style="top:26px">1</div><div class="cl" style="top:26px"><span class="c">// app.js</span></div>
  <div class="ln" style="top:56px">2</div><div class="cl" style="top:56px"><span class="f">App</span><span class="y">(</span><span class="p">{</span></div>
  <div class="ln" style="top:86px">3</div><div class="cl" style="top:86px">  <span class="f">onLaunch</span><span class="b">()</span> <span class="b">{</span></div>
  <div class="ln" style="top:116px">4</div><div class="cl" style="top:116px">    <span class="c">// <span class="cj">展示本地存储能力</span></span></div>
  <div class="ln" style="top:146px">5</div><div class="cl" style="top:146px">    <span class="k">const</span> logs = wx<span class="b">.</span><span class="f">getStorageSync</span><span class="y">(</span><span class="q">'</span><span class="s">logs</span><span class="q">'</span><span class="y">)</span> <span class="k">||</span> <span class="y">[]</span></div>
  <div class="ln" style="top:176px">6</div><div class="cl" style="top:176px">    logs<span class="b">.</span><span class="f">unshift</span><span class="y">(</span><span class="d">Date</span><span class="b">.</span><span class="f">now</span><span class="p">()</span><span class="y">)</span></div>
  <div class="ln" style="top:206px">7</div><div class="cl" style="top:206px">    wx<span class="b">.</span><span class="f">setStorageSync</span><span class="y">(</span><span class="q">'</span><span class="s">logs</span><span class="q">'</span><span class="b">,</span> logs<span class="y">)</span></div>
  <div class="ln" style="top:236px">8</div><div class="cl" style="top:236px"></div>
  <div class="ln" style="top:266px">9</div><div class="cl" style="top:266px">   <span class="c">/* // <span class="cj">登录</span></span></div>
  <div class="ln" style="top:296px">10</div><div class="cl" style="top:296px">    <span class="c">wx.login({</span></div>
  <div class="ln" style="top:326px">11</div><div class="cl" style="top:326px">      <span class="c">success: res =&gt; {</span></div>
  <div class="ln" style="top:356px">12</div><div class="cl" style="top:356px">        <span class="c">console.log(res.code);</span></div>
  <div class="ln" style="top:386px">13</div><div class="cl" style="top:386px">        <span class="c">// <span class="cj">发送</span> res.code <span class="cj">到后台换取</span> openId, sessionKey, unionId</span></div>
  <div class="ln" style="top:416px">14</div><div class="cl" style="top:416px">      <span class="c">}</span></div>
  <div class="ln" style="top:446px">15</div><div class="cl" style="top:446px">    <span class="c">})*/</span></div>
  <div class="ln" style="top:476px">16</div><div class="cl" style="top:476px">  <span class="b">},</span></div>
  <div class="ln" style="top:506px">17</div><div class="cl" style="top:506px">  globalData: <span class="b">{</span></div>
  <div class="ln" style="top:536px">18</div><div class="cl" style="top:536px">    userInfo: <span class="n">null</span><span class="b">,</span></div>
  <div class="ln" style="top:566px">19</div><div class="cl" style="top:566px">    token:<span class="lb">""</span><span class="b">,</span></div>
  <div class="ln" style="top:596px">20</div><div class="cl" style="top:596px">    apiUrl:<span class="lb">"</span><span class="s u">http://localhost:8080</span><span class="lb">"</span></div>
  <div class="ln" style="top:626px">21</div><div class="cl" style="top:626px">    <span class="c">/*<span class="u">http://8.142.21.132:8080</span> */</span></div>
  <div class="ln" style="top:656px">22</div><div class="cl" style="top:656px">    <span class="c">/*<span class="u">http://localhost:8080</span> */</span></div>
  <div class="ln" style="top:686px">23</div><div class="cl" style="top:686px">  <span class="b">}</span></div>
  <div class="ln" style="top:716px">24</div><div class="cl" style="top:716px"><span class="p">}</span><span class="y">)</span></div>
  <div class="ln" style="top:746px">25</div><div class="cl" style="top:746px"></div>
</div>

</body>
</html>
